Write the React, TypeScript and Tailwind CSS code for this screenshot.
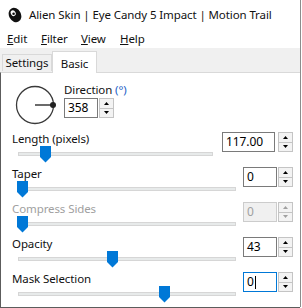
import React from 'react'

const rows = [
  { label: 'Length (pixels)', value: '117.00', pos: 22, wide: true },
  { label: 'Taper', value: '0', pos: -1 },
  { label: 'Compress Sides', value: '0', pos: -1, disabled: true },
  { label: 'Opacity', value: '43', pos: 89 },
  { label: 'Mask Selection', value: '0', pos: 141, focused: true },
]

function Arrow({ up, gray }: { up?: boolean; gray?: boolean }) {
  return (
    <svg width="5" height="3" viewBox="0 0 5 3">
      <path d={up ? 'M2.5 0 L5 3 H0 Z' : 'M0 0 H5 L2.5 3 Z'} fill={gray ? '#a0a0a0' : '#000'} />
    </svg>
  )
}

function Spin({ value, wide, disabled, focused }: { value: string; wide?: boolean; disabled?: boolean; focused?: boolean }) {
  return (
    <div className={`flex h-[20px] ${wide ? 'gap-[3px]' : 'gap-[1px]'}`}>
      <div
        className={`h-[20px] border flex items-center pl-[3px] text-[12px] leading-none ${wide ? 'w-[53px]' : 'w-[34px]'} ${
          focused ? 'border-[#0078d7] bg-white text-black' : disabled ? 'border-[#cccccc] bg-[#f0f0f0] text-[#a0a0a0]' : 'border-[#7a7a7a] bg-white text-black'
        }`}
      >
        {value}
        {focused && <span className="w-[1px] h-[13px] bg-black ml-[1px]" />}
      </div>
      <div className="flex flex-col w-[15px] h-[20px] border border-[#c4c4c4] bg-[#f3f3f3]">
        <div className="flex-1 flex items-center justify-center border-b border-[#c4c4c4]">
          <Arrow up gray={disabled} />
        </div>
        <div className="flex-1 flex items-center justify-center">
          <Arrow gray={disabled} />
        </div>
      </div>
    </div>
  )
}

function Slider({ pos, wide }: { pos: number; wide?: boolean }) {
  return (
    <div className={`relative h-[16px] ml-[6px] ${wide ? 'mr-[9px]' : 'mr-[7px]'}`}>
      <div className="absolute left-0 right-0 top-[6px] h-[4px] bg-[#e7eaea] border border-[#d6d6d6]" />
      <svg className="absolute top-0" style={{ left: pos }} width="11" height="17" viewBox="0 0 11 17">
        <path d="M0 0 H11 V11 L5.5 16.5 L0 11 Z" fill="#0078d7" />
      </svg>
    </div>
  )
}

export default function App() {
  return (
    <div className="w-[302px] h-[308px] bg-white font-['Noto_Sans',sans-serif] text-[11.5px] tracking-[-0.1px] text-[#111] overflow-hidden">
      <div className="w-[301px] h-[307px] flex flex-col border-r border-[#8c8c8c]">
        {/* Title bar */}
        <div className="h-[30px] flex items-center pl-[8px] shrink-0">
          <svg width="14" height="16" viewBox="0 0 14 16">
            <ellipse cx="7" cy="8" rx="6" ry="7.5" transform="rotate(-28 7 8)" fill="#111" />
            <ellipse cx="5.2" cy="6.2" rx="2.4" ry="3" transform="rotate(-28 5.2 6.2)" fill="#fff" />
            <circle cx="5.6" cy="6.8" r="1.3" fill="#111" />
          </svg>
          <span className="ml-[7px] whitespace-nowrap">Alien Skin | Eye Candy 5 Impact | Motion Trail</span>
        </div>

        {/* Menu */}
        <div className="h-[18px] flex items-center pl-[7px] shrink-0">
          <span className="w-[34px]"><span className="underline">E</span>dit</span>
          <span className="w-[40px]"><span className="underline">F</span>ilter</span>
          <span className="w-[39px]"><span className="underline">V</span>iew</span>
          <span><span className="underline">H</span>elp</span>
        </div>

        {/* Tabs */}
        <div className="h-[24px] bg-[#f0f0f0] flex items-end pl-[2px] shrink-0">
          <div className="h-[17px] w-[50px] border border-b-0 border-[#d9d9d9] bg-[#f0f0f0] flex items-center justify-center mb-[1px]">
            Settings
          </div>
          <div className="h-[22px] w-[45px] -mb-[1px] border border-b-0 border-[#d9d9d9] bg-white flex items-start justify-center pt-[3px] relative z-10">
            Basic
          </div>
        </div>

        {/* Page */}
        <div className="flex-1 bg-white border-t border-t-[#d9d9d9] border-l border-b border-l-[#5c5c5c] border-b-[#5c5c5c] flex flex-col">
          <div className="h-[59px] flex items-start">
            <svg className="ml-[14px] mt-[12px]" width="42" height="40" viewBox="0 0 42 40">
              <circle cx="20" cy="20" r="18.5" fill="none" stroke="#3a3a3a" strokeWidth="1.3" />
              <line x1="20" y1="20" x2="38" y2="20" stroke="#3a3a3a" strokeWidth="1.5" />
              <circle cx="38" cy="20" r="3" fill="#222" />
            </svg>
            <div className="ml-[7px] mt-[10px] flex flex-col">
              <div className="h-[14px] leading-[14px] whitespace-nowrap">
                Direction <span className="text-[#1c5fc8]">(°)</span>
              </div>
              <div className="mt-[1px]">
                <Spin value="358" />
              </div>
            </div>
          </div>

          {rows.map((r) => (
            <div key={r.label} className="h-[35px] flex items-start">
              <div className="flex-1 flex flex-col pl-[11px]">
                <div className={`h-[14px] leading-[14px] ${r.disabled ? 'text-[#a0a0a0]' : ''}`}>{r.label}</div>
                <Slider pos={r.pos} wide={r.wide} />
              </div>
              <div className="mr-[7px]">
                <Spin value={r.value} wide={r.wide} disabled={r.disabled} focused={r.focused} />
              </div>
            </div>
          ))}
        </div>
      </div>
    </div>
  )
}
